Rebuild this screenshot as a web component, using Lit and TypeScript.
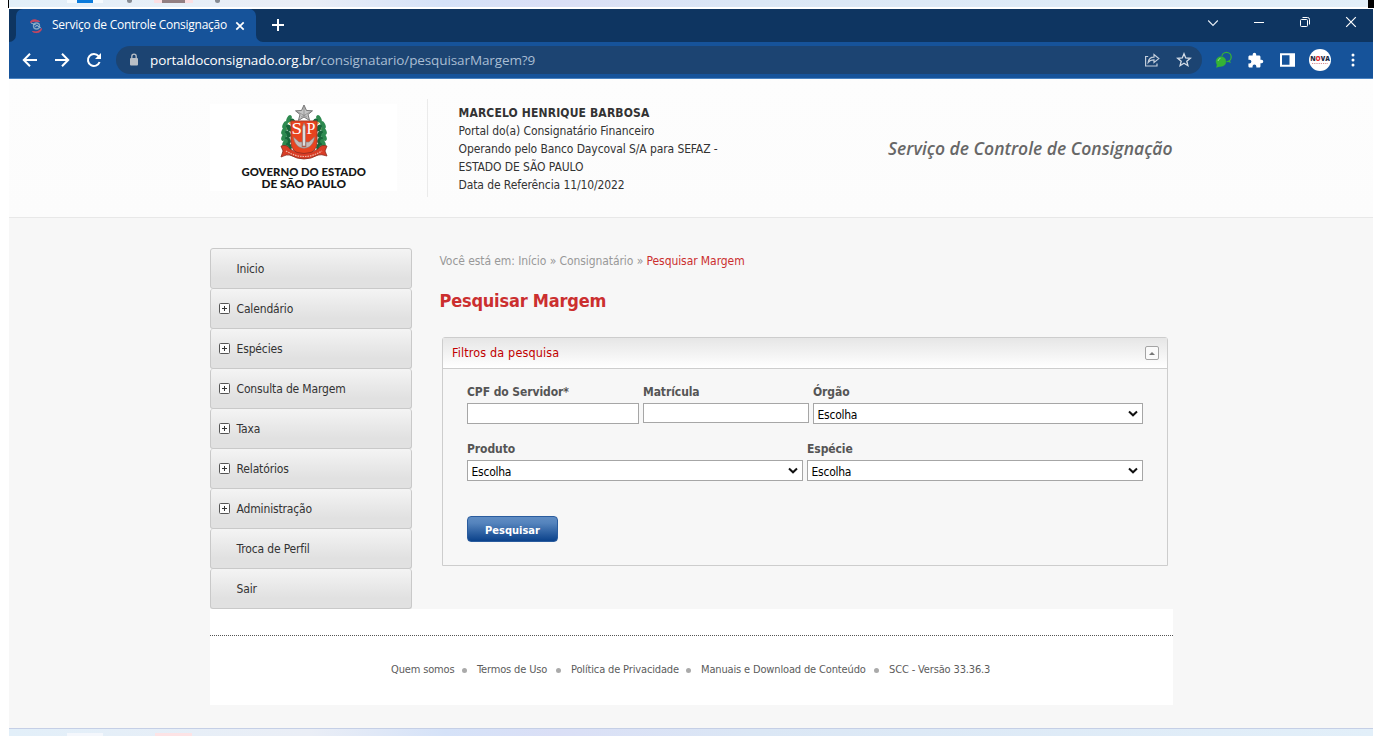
import { LitElement, html, css, svg, nothing } from "lit";
import { customElement, property } from "lit/decorators.js";

const MENU = [
  { label: "Inicio", open: false },
  { label: "Calendário", open: true },
  { label: "Espécies", open: true },
  { label: "Consulta de Margem", open: true },
  { label: "Taxa", open: true },
  { label: "Relatórios", open: true },
  { label: "Administração", open: true },
  { label: "Troca de Perfil", open: false },
  { label: "Sair", open: false },
];

const FOOTER = [
  { label: "Quem somos", cls: "f1" },
  { label: "Termos de Uso", cls: "f2" },
  { label: "Política de Privacidade", cls: "f3" },
  { label: "Manuais e Download de Conteúdo", cls: "f4" },
  { label: "SCC - Versão 33.36.3", cls: "f5" },
];

@customElement("browser-bar")
class BrowserBar extends LitElement {
  static styles = css`
    :host { display: block; height: 70px; font-family: "Open Sans", "Noto Sans", sans-serif; font-stretch: normal; letter-spacing: 0; color: #fff; }
    svg { display: block; flex: none; fill: none; }
    .tabs { display: flex; height: 33px; background: #0e3561; align-items: center; }
    .edge { width: 7px; height: 33px; background: #16539a; flex: none; }
    .edge i { display: block; width: 7px; height: 33px; background: #0e3561; }
    .edge.l i { border-bottom-right-radius: 7px; }
    .edge.r i { border-bottom-left-radius: 7px; }
    .tab { display: flex; align-items: center; width: 240px; height: 33px; box-sizing: border-box; background: #16539a; border-radius: 7px 7px 0 0; padding-left: 13px; }
    .tabtext { width: 175px; margin: -1px 8px 0 9px; font-size: 12px; letter-spacing: -0.26px; white-space: nowrap; line-height: 18px; }
    .plus { margin-left: 8px; margin-top: -1px; }
    .controls { display: flex; margin-left: auto; align-items: center; padding-right: 15px; }
    .chev { margin-right: 34px; margin-top: -5px; }
    .min { margin-right: 34px; margin-top: -7px; }
    .max { margin-right: 33px; margin-top: -7px; }
    .close { margin-top: -7px; }
    .tools { display: flex; height: 36px; background: #16539a; align-items: center; border-bottom: 1px solid #4a83c1; }
    .nav { display: flex; gap: 16px; margin: 0 14px 0 13px; }
    .url { display: flex; align-items: center; width: 1086px; height: 28px; border-radius: 14px; background: #1c4472; flex: none; box-sizing: border-box; padding-left: 12px; }
    .address { margin-left: 10px; font-size: 13.500px; line-height: 20px; color: #a9bdd3; letter-spacing: -0.100px; white-space: nowrap; }
    .address b { font-weight: 400; color: #fff; }
    .urlicons { display: flex; margin-left: auto; gap: 16px; padding-right: 10px; }
    .ext { display: flex; align-items: center; margin-left: 12px; }
    .green { margin-right: 14px; }
    .puzzle { margin-right: 16px; }
    .side { margin-right: 14px; }
    .avatar { margin-right: 20px; }
    .nova { font: 900 7px "Open Sans", sans-serif; }
  `;
  render() {
    return html`
      <div class="tabs">
        <div class="edge l"><i></i></div>
        <div class="tab">
          <svg width="14" height="16" viewBox="0 0 14 16">
            <path d="M1.500 4.500C2 1.500 6 .8 10.500 3.500C7 3 4 3 1.500 4.500Z" fill="#c9465f" stroke="#c9465f" />
            <path d="M3.500 13.500C7 14.500 10 13.500 12.500 10.500C12.500 14 8 16 3.500 13.500Z" fill="#c9465f" stroke="#c9465f" />
            <circle cx="7.500" cy="8" r="3" stroke="#7fa5c4" stroke-width="1.400" />
            <path d="M2 5L7 7L12 10M6 9L9 7" stroke="#a9c1d4" stroke-width=".8" />
          </svg>
          <div class="tabtext">Serviço de Controle Consignação</div>
          <svg width="10" height="10" viewBox="0 0 10 10"><path d="M1.300 1.300L8.700 8.700M8.700 1.300L1.300 8.700" stroke="#fff" stroke-width="1.700" /></svg>
        </div>
        <div class="edge r"><i></i></div>
        <svg class="plus" width="14" height="14" viewBox="0 0 14 14"><path d="M7 1V13M1 7H13" stroke="#fff" stroke-width="2" /></svg>
        <div class="controls">
          <svg class="chev" width="12" height="12" viewBox="0 0 12 12"><path d="M1.200 3.500L6 8.500L10.800 3.500" stroke="#e8eef5" stroke-width="1.100" /></svg>
          <svg class="min" width="12" height="12" viewBox="0 0 12 12"><path d="M1 6.500H11" stroke="#fff" /></svg>
          <svg class="max" width="12" height="12" viewBox="0 0 12 12"><rect x="1.500" y="3.500" width="7" height="7" rx="1" stroke="#fff" /><path d="M3.500 1.500H8.500Q10.500 1.500 10.500 3.500V8.500" stroke="#fff" /></svg>
          <svg class="close" width="14" height="12" viewBox="0 0 14 12"><path d="M2.200 1.200L11.800 10.800M11.800 1.200L2.200 10.800" stroke="#fff" stroke-width="1.200" /></svg>
        </div>
      </div>
      <div class="tools">
        <div class="nav">
          <svg width="16" height="16" viewBox="0 0 16 16"><path d="M15 8H2.500M8 1.800L1.800 8L8 14.200" stroke="#fff" stroke-width="2" /></svg>
          <svg width="16" height="16" viewBox="0 0 16 16"><path d="M1 8H13.500M8 1.800L14.200 8L8 14.200" stroke="#fff" stroke-width="2" /></svg>
          <svg width="16" height="16" viewBox="0 0 16 16"><path d="M13.600 10A6 6 0 1 1 12.600 4.200" stroke="#fff" stroke-width="2" /><path d="M15 1V7H9Z" fill="#fff" /></svg>
        </div>
        <div class="url">
          <svg width="12" height="14" viewBox="0 0 12 14"><rect x="2" y="5" width="8" height="7.500" rx="1" fill="#b9bfc6" /><path d="M3.800 5V3.400A2.200 2.200 0 0 1 8.200 3.400V5" stroke="#b9bfc6" stroke-width="1.300" /></svg>
          <div class="address"><b>portaldoconsignado.org.br</b>/consignatario/pesquisarMargem?9</div>
          <div class="urlicons">
            <svg width="16" height="16" viewBox="0 0 16 16" stroke="#c3cedb" stroke-width="1.200"><path d="M4.200 4.500H1.600V14H13V11.500" /><path d="M4.200 10.400C4.600 7 6.600 5.200 10 5.200V2.600L14.800 6.600L10 10.400V7.900C7.400 7.900 5.600 8.500 4.200 10.400Z" /></svg>
            <svg width="16" height="16" viewBox="0 0 16 16"><path d="M8 1.800L9.700 6L14.300 6.300L10.800 9.200L11.900 13.700L8 11.300L4.100 13.700L5.200 9.200L1.700 6.300L6.300 6Z" stroke="#d6dee8" stroke-width="1.300" /></svg>
          </div>
        </div>
        <div class="ext">
          <svg class="green" width="19" height="18" viewBox="0 0 19 18"><circle cx="12.500" cy="6" r="4.700" stroke="#35b335" stroke-width="1.300" /><path d="M13.500 10.800L17 12L15.500 9" fill="#35b335" /><circle cx="7" cy="10.500" r="5.400" fill="#35b335" stroke="#16539a" stroke-width=".6" /><path d="M3 13L2.200 16.800L7.500 15" fill="#35b335" /><path d="M4 10A3.500 3.500 0 0 1 6.500 7.300" stroke="#8fdb8f" /></svg>
          <svg class="puzzle" width="17" height="17" viewBox="0 0 24 24"><path fill="#fff" d="M20.500 11H19V7c0-1.100-.9-2-2-2h-4V3.500a2.500 2.500 0 0 0-5 0V5H4c-1.100 0-2 .9-2 2v3.800h1.500a2.700 2.700 0 0 1 0 5.400H2V20c0 1.100.9 2 2 2h3.800v-1.500a2.700 2.700 0 0 1 5.400 0V22H17c1.100 0 2-.9 2-2v-4h1.500a2.500 2.500 0 0 0 0-5z" /></svg>
          <svg class="side" width="15" height="14" viewBox="0 0 15 14"><path d="M1 1.200H14V12.800H1Z" stroke="#fff" stroke-width="2" /><path d="M9.500 1H14V13H9.500Z" fill="#fff" /></svg>
          <svg class="avatar" width="22" height="22" viewBox="0 0 22 22"><circle cx="11" cy="11" r="11" fill="#fff" /><text class="nova" x="1.200" y="12" textLength="19.600" lengthAdjust="spacingAndGlyphs" fill="#1b2a44">N<tspan fill="#e02a2a">O</tspan>VA</text><path d="M3 14.500H19" stroke="#d78f93" stroke-width="1" stroke-dasharray="1.200 1" /></svg>
          <svg width="4" height="14" viewBox="0 0 4 14"><g fill="#fff"><circle cx="2" cy="2" r="1.500" /><circle cx="2" cy="7" r="1.500" /><circle cx="2" cy="12" r="1.500" /></g></svg>
        </div>
      </div>
    `;
  }
}

@customElement("state-crest")
class StateCrest extends LitElement {
  static styles = css`
    :host { display: block; width: 187px; height: 87px; background: #fff; letter-spacing: 0; font-stretch: normal; }
    svg { display: block; }
    .gov { font: 900 10.500px Lato, "Liberation Sans", sans-serif; fill: #161616; }
    .sp { font: 16px "Liberation Serif", serif; fill: #fff; }
  `;
  render() {
    const leaves = [0, 1, 2, 3, 4, 5].map((i) => {
      const y = 15 + i * 6;
      const off = [4, 0, -1, -1, 0, 1][i];
      return svg`
        <ellipse cx=${75 + off} cy=${y} rx="2.300" ry="4.200" fill="#2e8a50" transform=${`rotate(25 ${75 + off} ${y})`} />
        <ellipse cx=${79 + off} cy=${y + 3} rx="2.400" ry="3.800" fill="#17663a" transform=${`rotate(-30 ${79 + off} ${y + 3})`} />
        <circle cx=${76 + off} cy=${y + 4} r="1" fill="#d9b13b" />
        <ellipse cx=${113 - off} cy=${y} rx="2.300" ry="4.200" fill="#2e8a50" transform=${`rotate(-25 ${113 - off} ${y})`} />
        <ellipse cx=${109 - off} cy=${y + 3} rx="2.400" ry="3.800" fill="#17663a" transform=${`rotate(30 ${109 - off} ${y + 3})`} />
        <circle cx=${112 - off} cy=${y + 4} r="1" fill="#d9b13b" />`;
    });
    return html`
      <svg width="187" height="87" viewBox="0 0 187 87">
        ${leaves}
        <path d="M81 17H107V38Q107 48 94 53Q81 48 81 38Z" fill="#e8431f" stroke="#a83b28" />
        <path d="M83.500 33C85 48 103 48 104.500 33L99 38H96V43H92V38H89Z" fill="#c5bab8" stroke="#8b7773" stroke-width=".6" />
        <path d="M94 19L95.500 23V42H92.500V23Z" fill="#ddd" stroke="#85706c" stroke-width=".6" />
        <text class="sp" x="81.500" y="30" textLength="10.500" lengthAdjust="spacingAndGlyphs">S</text>
        <text class="sp" x="96.500" y="30">P</text>
        <path d="M71 42Q77 40 80 45Q94 54 108 45Q111 40 117 42L115 47L117 52Q111 50 108 51Q94 59 80 51Q77 50 71 53L73 47Z" fill="#d93d26" stroke="#8c2c20" stroke-width=".8" />
        <path d="M76 47Q94 58 112 47" fill="none" stroke="#f0b6a6" stroke-width="1.200" stroke-dasharray="1.500 1" />
        <path d="M94 1L96.500 6.500L102.500 6.800L98 10.500L99.600 16.500L94 13L88.400 16.500L90 10.500L85.500 6.800L91.500 6.500Z" fill="#c4c4c4" stroke="#6b6b6b" stroke-width=".9" />
        <path d="M94 3V13M87 7.500L97 13M101 7.500L91 13" stroke="#888" stroke-width=".7" />
        <text class="gov" x="31.500" y="71.500" textLength="124.500" lengthAdjust="spacingAndGlyphs">GOVERNO DO ESTADO</text>
        <text class="gov" x="51.500" y="83.500" textLength="84.500" lengthAdjust="spacingAndGlyphs">DE SÃO PAULO</text>
      </svg>
    `;
  }
}

@customElement("pick-list")
class PickList extends LitElement {
  @property() value = "Escolha";
  static styles = css`
    :host { display: flex; align-items: center; box-sizing: border-box; height: 21px; border: 1px solid #a6a6a6; background: #fff; padding: 0 4px 0 3.500px; color: #000; }
    .value { flex: 1; font-size: 12px; line-height: 18px; letter-spacing: -0.250px; padding-top: 3px; }
    svg { display: block; fill: none; }
  `;
  render() {
    return html`<span class="value">${this.value}</span>
      <svg width="10" height="8" viewBox="0 0 10 8"><path d="M1 1.500L5 5.300L9 1.500" stroke="#111" stroke-width="2" /></svg>`;
  }
}

@customElement("app-root")
class AppRoot extends LitElement {
  static styles = css`
    :host { display: block; width: 1382px; height: 736px; overflow: hidden; background: #fff; font-family: "DejaVu Sans Condensed", "DejaVu Sans", sans-serif; font-stretch: condensed; font-size: 12px; color: #333; }
    * { box-sizing: border-box; }
    svg { display: block; fill: none; }
    .strip { display: flex; align-items: flex-start; margin-left: 9px; width: 1364px; height: 7px; background: linear-gradient(90deg, #e2eff9, #eaeef6 22%, #d5e2f8 32%, #dadff6 40%, #dbe7f5 55%, #e2eff9); }
    .frame { display: flex; justify-content: space-between; height: 9px; }
    .frame .strip { width: 1359px; height: 7px; margin: 0; padding-left: 58px; }
    .ledge { width: 9px; height: 8px; border-right: 1px solid #000; }
    .redge { width: 14px; height: 8px; background: #000; border-right: 8px solid #fff; }
    .page { width: 1364px; margin-left: 9px; }
    .header { height: 139px; background: linear-gradient(#fdfdfd, #fcfcfc); border-bottom: 1px solid #e8e8e8; padding: 20px 0 0 201px; display: flex; }
    .logo { margin-top: 5px; }
    .rule { width: 1px; height: 98px; background: #ebebeb; margin: 0 31px 0 30px; }
    .who { width: 300px; padding-top: 5px; line-height: 18px; white-space: nowrap; margin-left: -0.500px; margin-right: 0.500px; }
    .who b { display: block; letter-spacing: 0.150px; }
    .who span { display: block; letter-spacing: -0.100px; }
    .system { margin: 37px 0 0 129px; width: 285px; font: italic 600 17.500px/24px "Open Sans", sans-serif; color: #676767; white-space: nowrap; }
    .body { height: 510px; background: #f7f7f7; padding: 30px 0 0 201px; }
    .cols { display: flex; height: 361px; }
    .menu { width: 202px; margin-right: 28px; letter-spacing: -0.150px; }
    .item { display: flex; align-items: center; height: 40px; border: 1px solid #c9c9c9; border-top: 0; border-radius: 3px; background: linear-gradient(#f4f4f4, #e1e1e1 75%); padding-left: 8px; }
    .item:first-child { height: 41px; border-top: 1px solid #c9c9c9; }
    .mark { width: 12px; height: 12px; margin-right: 5.500px; }
    .main { width: 728px; }
    .crumbs { height: 24px; line-height: 24px; padding-top: 1px; color: #999; letter-spacing: -0.080px; white-space: nowrap; margin-left: -0.500px; }
    .crumbs em { font-style: normal; color: #cb2f2f; }
    .h1 { margin: 17px 0 24px -0.500px; font-size: 18px; line-height: 24px; font-weight: 700; letter-spacing: -0.200px; color: #cb2f2f; white-space: nowrap; }
    .panel { margin-left: 2px; width: 726px; height: 229px; border: 1px solid #cdcdcd; border-radius: 3px 3px 0 0; }
    .phead { display: flex; justify-content: space-between; align-items: center; height: 31px; background: linear-gradient(#e6e6e6, #fff); border-bottom: 1px solid #cdcdcd; padding: 0 8px 0 9px; color: #c10000; font-size: 12.500px; letter-spacing: 0.150px; }
    .phead span { margin-top: -2px; }
    .form { padding: 13px 24px 0; }
    .row { display: flex; gap: 4px; height: 57px; align-items: flex-start; }
    .field { display: block; }
    .label { display: block; height: 21px; line-height: 20px; font-weight: 700; letter-spacing: -0.080px; color: #555; white-space: nowrap; }
    .box { display: block; height: 21px; border: 1px solid #a6a6a6; background: #fff; padding: 0; outline: 0; width: 100%; border-radius: 0; }
    .w172 { width: 172px; }
    .w166 { width: 166px; }
    .w166 .box { height: 20px; }
    .w330 { width: 330px; }
    .w336 { width: 336px; }
    .go { display: block; margin-top: 20px; width: 91px; height: 26px; padding: 4px 0 0; border: 1px solid #2a5c9e; border-radius: 4px; background: linear-gradient(#5f8cc3, #5584bd 25%, #0b428b); color: #fff; font: bold 11px/20px "DejaVu Sans Condensed", "DejaVu Sans", sans-serif; font-stretch: condensed; text-align: center; }
    .footer { width: 963px; height: 96px; background: #fff; padding-top: 26px; }
    .links { display: flex; align-items: center; height: 68px; border-top: 1px dotted #555; padding-left: 181px; font-size: 11px; letter-spacing: -0.150px; color: #5c5c5c; white-space: nowrap; }
    .dot { width: 5px; height: 5px; border-radius: 3px; background: #aaa; margin: 1px 10px 0 8px; }
    .f1 { width: 63px; }
    .f2 { width: 71px; }
    .f3 { width: 107px; }
    .f4 { width: 165px; }
    .bottom { border-top: 1px solid #c5cfe6; height: 8px; padding-left: 58px; }
    .chip { width: 36px; height: 3px; margin-top: 4px; background: #f4f7fc; margin-right: 52px; }
    .chip2 { width: 37px; height: 3px; margin-top: 4px; background: #fde3e5; }
    .blue { width: 36px; height: 3px; background: #f5fafe; border: solid #f5fafe; border-width: 0 10px; margin-right: 24px; }
    .blue i { display: block; width: 16px; height: 3px; background: #0b7bdc; }
    .gd { width: 5px; height: 3px; background: #858a92; border-radius: 0 0 3px 3px; }
    .brown { width: 39px; height: 3px; background: #927f83; background-clip: padding-box; border: solid #fbdfe3; border-width: 0 8px; margin: 0 22px; }
  `;
  render() {
    return html`
      <div class="frame">
        <div class="ledge"></div>
        <div class="strip"><div class="blue"><i></i></div><div class="gd"></div><div class="brown"></div><div class="gd"></div></div>
        <div class="redge"></div>
      </div>
      <div class="page">
        <browser-bar></browser-bar>
        <div class="header">
          <state-crest class="logo"></state-crest>
          <div class="rule"></div>
          <div class="who">
            <b>MARCELO HENRIQUE BARBOSA</b>
            <span>Portal do(a) Consignatário Financeiro</span>
            <span>Operando pelo Banco Daycoval S/A para SEFAZ -</span>
            <span>ESTADO DE SÃO PAULO</span>
            <span>Data de Referência 11/10/2022</span>
          </div>
          <div class="system">Serviço de Controle de Consignação</div>
        </div>
        <div class="body">
          <div class="cols">
            <div class="menu">
              ${MENU.map((m) => html`<div class="item">
                <div class="mark">${m.open
                  ? html`<svg width="12" height="12" viewBox="0 0 12 12"><rect x=".5" y=".5" width="10" height="10" rx="1" fill="#fcfcfc" stroke="#555" /><path d="M5.500 3V8M3 5.500H8" stroke="#333" /></svg>`
                  : nothing}</div>
                <span>${m.label}</span></div>`)}
            </div>
            <div class="main">
              <div class="crumbs">Você está em: Início » Consignatário » <em>Pesquisar Margem</em></div>
              <div class="h1">Pesquisar Margem</div>
              <div class="panel">
                <div class="phead">
                  <span>Filtros da pesquisa</span>
                  <svg width="14" height="14" viewBox="0 0 14 14"><rect x=".5" y=".5" width="13" height="13" rx="1.500" fill="#fafafa" stroke="#a4a4a4" /><path d="M4 9L7 6L10 9Z" fill="#777" /></svg>
                </div>
                <div class="form">
                  <div class="row">
                    <label class="field w172"><span class="label">CPF do Servidor*</span><input class="box" /></label>
                    <label class="field w166"><span class="label">Matrícula</span><input class="box" /></label>
                    <div class="field w330"><span class="label">Órgão</span><pick-list></pick-list></div>
                  </div>
                  <div class="row">
                    <div class="field w336"><span class="label">Produto</span><pick-list></pick-list></div>
                    <div class="field w336"><span class="label">Espécie</span><pick-list></pick-list></div>
                  </div>
                  <button class="go">Pesquisar</button>
                </div>
              </div>
            </div>
          </div>
          <div class="footer">
            <div class="links">
              ${FOOTER.map((f, i) => html`${i ? html`<i class="dot"></i>` : nothing}<span class=${f.cls}>${f.label}</span>`)}
            </div>
          </div>
        </div>
      </div>
      <div class="strip bottom"><div class="chip"></div><div class="chip2"></div></div>
    `;
  }
}
